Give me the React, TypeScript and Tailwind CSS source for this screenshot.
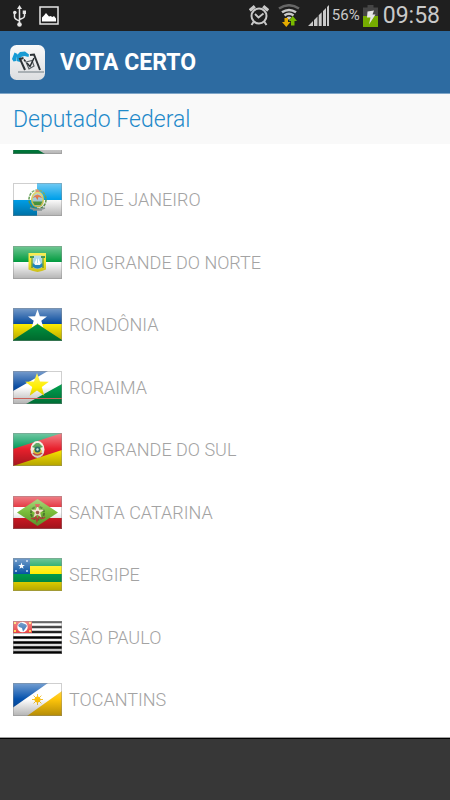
import React, { useState } from 'react';

interface State {
  id: string;
  name: string;
  flag: React.ReactNode;
}

const STAR = '0,-10 2.4,-3.2 9.5,-3.1 3.8,1.2 5.9,8.1 0,4 -5.9,8.1 -3.8,1.2 -9.5,-3.1 -2.4,-3.2';

const states: State[] = [
  {
    id: 'pr',
    name: 'PARANÁ',
    flag: (
      <>
        <rect width="49" height="33" fill="#009b4c" />
        <path d="M0 0 49 27V33H32L0 14Z" fill="#fff" />
        <circle cx="24" cy="16" r="7" fill="#0a4ea2" />
      </>
    ),
  },
  {
    id: 'rj',
    name: 'RIO DE JANEIRO',
    flag: (
      <>
        <rect width="49" height="33" fill="#fff" />
        <path d="M24 0H49V17H24ZM0 17H24V33H0Z" fill="#00a0ea" />
        <ellipse cx="24.5" cy="16.5" rx="8.5" ry="9.5" fill="none" stroke="#5d9a4c" strokeWidth="1.5" strokeDasharray="3 1" />
        <ellipse cx="24.5" cy="16.5" rx="6.5" ry="8" fill="#d8cf52" />
        <ellipse cx="24.5" cy="16.5" rx="5" ry="6.3" fill="#a5cbd8" />
        <path d="M19.5 15q5-7 10 0l-4-1-1 3-2-3ZM22 9h5l-2.5-3Z" fill="#e0703f" />
        <path d="M19.5 18.5h10l-2 3.5h-6Z" fill="#4e9d3e" />
        <path d="M17 25q7 3 15 0M20 27h9" stroke="#a7b5b5" strokeWidth="1.5" fill="none" />
      </>
    ),
  },
  {
    id: 'rn',
    name: 'RIO GRANDE DO NORTE',
    flag: (
      <>
        <rect width="49" height="33" fill="#fff" />
        <rect width="49" height="16" fill="#009b3e" />
        <path d="M15.5 7H33V23.5L29 25 24.5 26 20 25 15.5 23.5Z" fill="#f5e622" />
        <path d="M19.5 9.5H29.5V21Q24.5 25 19.5 21Z" fill="#a7d5e8" />
        <path d="M19.5 17.5H29.5V20.5Q24.5 24.5 19.5 20.5Z" fill="#248fc6" />
        <path d="M21 17h7l-1 2h-5ZM24 12v5h-2.5Zm1 0 2.5 5H25Z" fill="#fff" />
        <path d="M19 11v11M30 11v11" stroke="#37893a" strokeWidth="1" />
        <path d="M17 10h4v2h-4Zm11 0h4v2h-4Z" fill="#2c8a39" />
      </>
    ),
  },
  {
    id: 'ro',
    name: 'RONDÔNIA',
    flag: (
      <>
        <rect width="49" height="33" fill="#074a9d" />
        <rect y="16" width="49" height="17" fill="#ffec00" />
        <path d="M24.5 16 49 32V33H0V32Z" fill="#009440" />
        <polygon points={STAR} transform="translate(24.5 11.5)" fill="#fff" />
      </>
    ),
  },
  {
    id: 'rr',
    name: 'RORAIMA',
    flag: (
      <>
        <rect width="49" height="33" fill="#fff" />
        <path d="M0 0H35L0 20Z" fill="#0a4da3" />
        <path d="M49 13V33H13Z" fill="#009b4c" />
        <rect y="27" width="49" height="1" fill="#ff7a70" />
        <polygon points={STAR} transform="translate(24 14.5) scale(1.25)" fill="#ffee00" />
      </>
    ),
  },
  {
    id: 'rs',
    name: 'RIO GRANDE DO SUL',
    flag: (
      <>
        <rect width="49" height="33" fill="#e8202c" />
        <path d="M0 0H49L0 16Z" fill="#009b5a" />
        <path d="M49 17V33H0Z" fill="#ffe800" />
        <ellipse cx="24.5" cy="16.5" rx="7" ry="8.5" fill="#f2efe2" />
        <path d="M19 14 23 10h3l4 4-3 1h-5Z" fill="#4c9e50" />
        <path d="M20 18l2-3h5l2 3-2 4h-5Z" fill="#e8c93b" />
        <circle cx="24.5" cy="16.5" r="3" fill="#266c63" />
        <circle cx="24.5" cy="16.5" r="1.2" fill="#c7dfe0" />
        <path d="M20 20q4 4 9 0" stroke="#d3554d" strokeWidth="1.5" fill="none" />
      </>
    ),
  },
  {
    id: 'sc',
    name: 'SANTA CATARINA',
    flag: (
      <>
        <rect width="49" height="33" fill="#e11b27" />
        <rect y="11" width="49" height="11" fill="#fff" />
        <path d="M4 16.5 24.5 3 45 16.5 24.5 30Z" fill="#79bd3a" />
        <ellipse cx="24.5" cy="17" rx="6.5" ry="6.5" fill="none" stroke="#517b2f" strokeWidth="2" strokeDasharray="3 1" />
        <polygon points={STAR} transform="translate(24.5 16) scale(.7)" fill="#f3e3cb" />
        <path d="M22 8h5l-1 3h-3Z" fill="#d5483d" />
        <path d="M18 22q3 2 5-1l1 4 2-4q3 3 6 0" stroke="#c9463b" strokeWidth="1.5" fill="none" />
        <circle cx="24.5" cy="16.5" r="1.8" fill="#a2594b" />
      </>
    ),
  },
  {
    id: 'se',
    name: 'SERGIPE',
    flag: (
      <>
        <rect width="49" height="33" fill="#009b4c" />
        <rect y="8" width="49" height="8" fill="#ffec00" />
        <rect y="24" width="49" height="9" fill="#ffec00" />
        <rect width="17" height="16" fill="#0753a3" />
        <polygon points={STAR} transform="translate(8.5 8) scale(.35)" fill="#fff" />
        <path d="M2 2h2v2H2Zm11 0h2v2h-2ZM2 12h2v2H2Zm11 0h2v2h-2Z" fill="#8fb4dc" />
      </>
    ),
  },
  {
    id: 'sp',
    name: 'SÃO PAULO',
    flag: (
      <>
        <rect width="49" height="33" fill="#fff" />
        <path
          d="M0 1H49M0 6H49M0 11H49M0 16.5H49M0 21.5H49M0 26.5H49M0 31.5H49"
          stroke="#000"
          strokeWidth="2.4"
        />
        <rect width="19" height="12" fill="#e62b2c" />
        <circle cx="9.5" cy="6" r="5.2" fill="#fff" />
        <path d="M5 4 8 1.5l5 2 1 1.5-2 3-2 2.5-1-3.5-3-1Z" fill="#1b60ac" />
        <path d="M1 1h2v2H1Zm15 0h2v2h-2ZM1 9h2v2H1Zm15 0h2v2h-2Z" fill="#ffd23e" />
      </>
    ),
  },
  {
    id: 'to',
    name: 'TOCANTINS',
    flag: (
      <>
        <rect width="49" height="33" fill="#fff" />
        <path d="M0 0H35L0 24.5Z" fill="#0653ae" />
        <path d="M49 8V33H14Z" fill="#ffc60a" />
        <path
          d="M24.5 11v11M19 16.5h11M20.6 12.6l7.8 7.8M28.4 12.6l-7.8 7.8"
          stroke="#f6c330"
          strokeWidth="1"
        />
        <circle cx="24.5" cy="16.5" r="3" fill="#ffc20a" />
      </>
    ),
  },
];

const Flag: React.FC<{ children: React.ReactNode }> = ({ children }) => (
  <svg width="49" height="33" viewBox="0 0 49 33" className="shrink-0" aria-hidden="true">
    {children}
    <rect width="49" height="16" fill="url(#gloss)" />
    <rect y="16" width="49" height="17" fill="url(#shade)" />
    <rect x=".5" y=".5" width="48" height="32" fill="none" stroke="#888" strokeOpacity=".4" />
  </svg>
);

const FlagGradients: React.FC = () => (
  <svg width="0" height="0" className="absolute" aria-hidden="true">
    <defs>
      <linearGradient id="gloss" x1="0" y1="0" x2="0" y2="1">
        <stop offset="0" stopColor="#fff" stopOpacity=".45" />
        <stop offset="1" stopColor="#fff" stopOpacity="0" />
      </linearGradient>
      <linearGradient id="shade" x1="0" y1="0" x2="0" y2="1">
        <stop offset="0" stopColor="#000" stopOpacity="0" />
        <stop offset="1" stopColor="#000" stopOpacity=".3" />
      </linearGradient>
    </defs>
  </svg>
);

const StatusBar: React.FC = () => (
  <div className="flex h-[31px] shrink-0 items-center justify-between bg-[#1f1f1f] pl-[13px] pr-[10px] text-[#c9c9c9]">
    <div className="flex items-center gap-[13px]">
      {/* USB */}
      <svg width="13" height="22" viewBox="0 0 13 22" fill="none" stroke="#e6e6e6" strokeWidth="1.5">
        <path d="M6.5 3v16M1.5 8v4q0 2 5 4M11.5 7v4q0 2-5 3.5" />
        <path d="M6.5 0 9 4H4Z" fill="#e6e6e6" stroke="none" />
        <circle cx="6.5" cy="19.5" r="2.3" fill="#e6e6e6" stroke="none" />
        <circle cx="1.8" cy="7.5" r="1.8" fill="#e6e6e6" stroke="none" />
        <path d="M9.7 5.5H13V9H9.7Z" fill="#e6e6e6" stroke="none" />
      </svg>
      {/* Screenshot saved */}
      <svg width="20" height="19" viewBox="0 0 20 19">
        <rect x="1" y="1" width="18" height="17" fill="none" stroke="#e6e6e6" strokeWidth="1.5" />
        <path d="M3 15.5V11.5L5 9.5 7 7l3 3.5 1.5-.5 2 1 1.5-1 2 2.5v3Z" fill="#fff" />
      </svg>
    </div>
    <div className="flex items-center">
      {/* Alarm */}
      <svg width="20" height="21" viewBox="0 0 20 21" fill="none" stroke="#c9c9c9" className="mr-[9px]">
        <circle cx="10" cy="11" r="7.5" strokeWidth="2" />
        <path d="M6 9 9.5 12.5 14.5 8.5" strokeWidth="1.8" />
        <path d="M.8 5.5 5.8 1.3M19.2 5.5 14.2 1.3" strokeWidth="3.2" />
        <path d="M4.5 17 2.5 20M15.5 17l2 3" strokeWidth="2" />
      </svg>
      {/* Wi-Fi */}
      <svg width="22" height="23" viewBox="0 0 22 23" fill="none" className="mr-[8px]">
        <path d="M1 4.5Q11-2 21 4.5" stroke="#666" strokeWidth="2.5" />
        <path d="M4 8.3Q11 3.5 18 8.3M6.5 11.5Q11 8 15.5 11.5" stroke="#c9c9c9" strokeWidth="2.5" />
        <path d="M8.5 13.5q2.5-2 5 0L11 16Z" fill="#c9c9c9" />
        <path d="M6.5 14h3.5v4H12.5L8.3 23 4 18h2.5Z" fill="#e5ab00" />
        <path d="M13 21.5h3.5V17H19l-4.2-5L10.8 17H13Z" fill="#79b900" />
      </svg>
      {/* Signal */}
      <svg width="21" height="21" viewBox="0 0 21 21" fill="#c9c9c9" className="mr-[3px]">
        <path d="M0 21 5 16V21ZM6 21V15L9.5 11.5V21ZM10.7 21V10.3L13.7 7.3V21ZM15 21V6L18 3V21ZM19 21V2L21 0V21Z" />
      </svg>
      <span className="mr-[3px] text-[15px] leading-none">56%</span>
      {/* Battery charging */}
      <svg width="15" height="22" viewBox="0 0 15 22" className="mr-[5px]">
        <path d="M0 2.5H4.5V0H10.5V2.5H15V22H0Z" fill="#454545" />
        <rect y="11" width="15" height="11" fill="#75ab00" />
        <path d="M4.5 6.5 11 5.5 9.5 9.5H12.5L6 19.5 7.5 12.5H4Z" fill="#e6e6e6" />
      </svg>
      <span className="text-[23px] leading-none">09:58</span>
    </div>
  </div>
);

const AppIcon: React.FC = () => (
  <svg width="36" height="36" viewBox="0 0 36 36" className="shrink-0" aria-hidden="true">
    <defs>
      <linearGradient id="tile" x1="0" y1="0" x2="0" y2="1">
        <stop offset="0" stopColor="#fafafa" />
        <stop offset="1" stopColor="#dcdee0" />
      </linearGradient>
    </defs>
    <rect width="35" height="35" rx="6.5" fill="url(#tile)" />
    <path d="M8 27H34" stroke="#a9b0b4" strokeWidth="2" />
    <path d="M2 14 4.5 7.5 7.5 9 6 16 3.5 16.5Z" fill="#159bd5" />
    <path d="M7 10 10 7 15 6.5 19 9.5 18.5 12 14.5 11 11 12 10 17 6.5 16Z" fill="#1a9bd3" />
    <path d="M15 25 10 14 13.5 13M20 10 24 9.5 30 25" fill="none" stroke="#2d3337" strokeWidth="2" />
    <path d="M16 17 22 15.5 24 21 19 24Z" fill="none" stroke="#5a6165" strokeWidth="1.2" />
    <path d="M17 18 20 21.5 24 13M14 14.5l1.5 2" fill="none" stroke="#262c30" strokeWidth="1.5" />
  </svg>
);

const App: React.FC = () => {
  const [selected, setSelected] = useState<string | null>(null);

  return (
    <div className="flex h-screen w-full flex-col overflow-hidden bg-white font-[Roboto,sans-serif]">
      <FlagGradients />
      <StatusBar />

      {/* Header */}
      <header className="flex h-[63px] shrink-0 items-center gap-[14px] border-b border-[#7fa6c8] bg-[#2d6ba1] pl-[10px] pt-[2px]">
        <AppIcon />
        <h1 className="text-[23px] font-bold leading-7 text-white">VOTA CERTO</h1>
      </header>

      <h2 className="flex h-[50px] shrink-0 items-center bg-[#f9f9f9] px-[13px] pt-[2px] text-[23px] font-light text-[#1f8aca]">
        Deputado Federal
      </h2>

      {/* State list, opens scrolled to its end */}
      <main className="mt-[6px] flex min-h-0 flex-1 flex-col-reverse overflow-y-auto border-b border-[#a0a0a0] pb-[6px] [scrollbar-width:none]">
        <ul className="shrink-0">
          {states.map(state => (
            <li key={state.id} className="odd:h-[62px] even:h-[63px]">
              <button
                onClick={() => setSelected(state.id)}
                aria-pressed={selected === state.id}
                className="flex h-full w-full items-center gap-[7px] px-[13px] text-left text-[18px] font-light text-[#a3a3a3]"
              >
                <Flag>{state.flag}</Flag>
                <span>{state.name}</span>
              </button>
            </li>
          ))}
        </ul>
      </main>

      {/* Ad area */}
      <footer className="h-[62px] shrink-0 border-t border-black bg-[#373737]" />
    </div>
  );
};

export default App;
